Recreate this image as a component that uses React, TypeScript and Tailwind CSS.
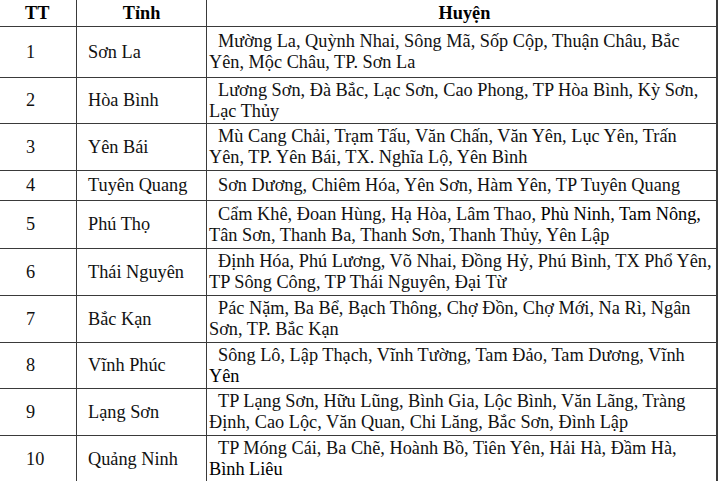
import React from "react";

interface Row {
  tt: string;
  tinh: string;
  lines: React.ReactNode[];
  h: string;
}

const ROWS: Row[] = [
  {
    tt: "1",
    tinh: "Sơn La",
    lines: ["Mường La, Quỳnh Nhai, Sông Mã, Sốp Cộp, Thuận Châu, Bắc", "Yên, Mộc Châu, TP. Sơn La"],
    h: "h-[51px]",
  },
  {
    tt: "2",
    tinh: "Hòa Bình",
    lines: ["Lương Sơn, Đà Bắc, Lạc Sơn, Cao Phong, TP Hòa Bình, Kỳ Sơn,", "Lạc Thủy"],
    h: "h-[46px]",
  },
  {
    tt: "3",
    tinh: "Yên Bái",
    lines: ["Mù Cang Chải, Trạm Tấu, Văn Chấn, Văn Yên, Lục Yên, Trấn", "Yên, TP. Yên Bái, TX. Nghĩa Lộ, Yên Bình"],
    h: "h-[47px]",
  },
  {
    tt: "4",
    tinh: "Tuyên Quang",
    lines: ["Sơn Dương, Chiêm Hóa, Yên Sơn, Hàm Yên, TP Tuyên Quang"],
    h: "h-[30px]",
  },
  {
    tt: "5",
    tinh: "Phú Thọ",
    lines: [
      <>
        Cẩm Khê, Đoan Hùng, Hạ Hòa, Lâm Thao, <span className="text-black">Phù Ninh, Tam Nông,</span>
      </>,
      "Tân Sơn, Thanh Ba, Thanh Sơn, Thanh Thủy, Yên Lập",
    ],
    h: "h-[48px]",
  },
  {
    tt: "6",
    tinh: "Thái Nguyên",
    lines: ["Định Hóa, Phú Lương, Võ Nhai, Đồng Hỷ, Phú Bình, TX Phổ Yên,", "TP Sông Công, TP Thái Nguyên, Đại Từ"],
    h: "h-[47px]",
  },
  {
    tt: "7",
    tinh: "Bắc Kạn",
    lines: ["Pác Nặm, Ba Bể, Bạch Thông, Chợ Đồn, Chợ Mới, Na Rì, Ngân", "Sơn, TP. Bắc Kạn"],
    h: "h-[47px]",
  },
  {
    tt: "8",
    tinh: "Vĩnh Phúc",
    lines: ["Sông Lô, Lập Thạch, Vĩnh Tường, Tam Đảo, Tam Dương, Vĩnh", <span className="text-black">Yên</span>],
    h: "h-[46px]",
  },
  {
    tt: "9",
    tinh: "Lạng Sơn",
    lines: ["TP Lạng Sơn, Hữu Lũng, Bình Gia, Lộc Bình, Văn Lãng, Tràng", "Định, Cao Lộc, Văn Quan, Chi Lăng, Bắc Sơn, Đình Lập"],
    h: "h-[47px]",
  },
  {
    tt: "10",
    tinh: "Quảng Ninh",
    lines: ["TP Móng Cái, Ba Chẽ, Hoành Bồ, Tiên Yên, Hải Hà, Đầm Hà,", <span className="text-black">Bình Liêu</span>],
    h: "h-[47px]",
  },
];

export default function App() {
  return (
    <div
      className="w-[720px] h-[481px] overflow-hidden bg-white text-[#111] text-[18.3px] leading-[21px]"
      style={{ fontFamily: '"Liberation Serif", "Times New Roman", serif' }}
    >
      <div className="w-[718px] border-r-2 border-[#3a3a3a]">
        {/* Header */}
        <div className="grid grid-cols-[77px_130px_1fr] h-[27px] border-b border-[#3a3a3a] font-bold text-black">
          <div className="border-r border-[#3a3a3a] pl-[25px] flex items-center">TT</div>
          <div className="border-r border-[#3a3a3a] flex items-center justify-center">Tỉnh</div>
          <div className="flex items-center justify-center pl-[6px]">Huyện</div>
        </div>

        {ROWS.map((row) => (
          <div
            key={row.tt}
            className={`grid grid-cols-[77px_130px_1fr] border-b border-[#3a3a3a] ${row.h}`}
          >
            <div className="border-r border-[#3a3a3a] pl-[26px] flex items-center">{row.tt}</div>
            <div className="border-r border-[#3a3a3a] pl-[11px] flex items-center whitespace-nowrap">
              {row.tinh}
            </div>
            <div className="flex flex-col justify-center pl-[2px] whitespace-nowrap">
              {row.lines.map((line, i) => (
                <div key={i} className={i === 0 ? "pl-[9px]" : ""}>
                  {line}
                </div>
              ))}
            </div>
          </div>
        ))}
      </div>
    </div>
  );
}
